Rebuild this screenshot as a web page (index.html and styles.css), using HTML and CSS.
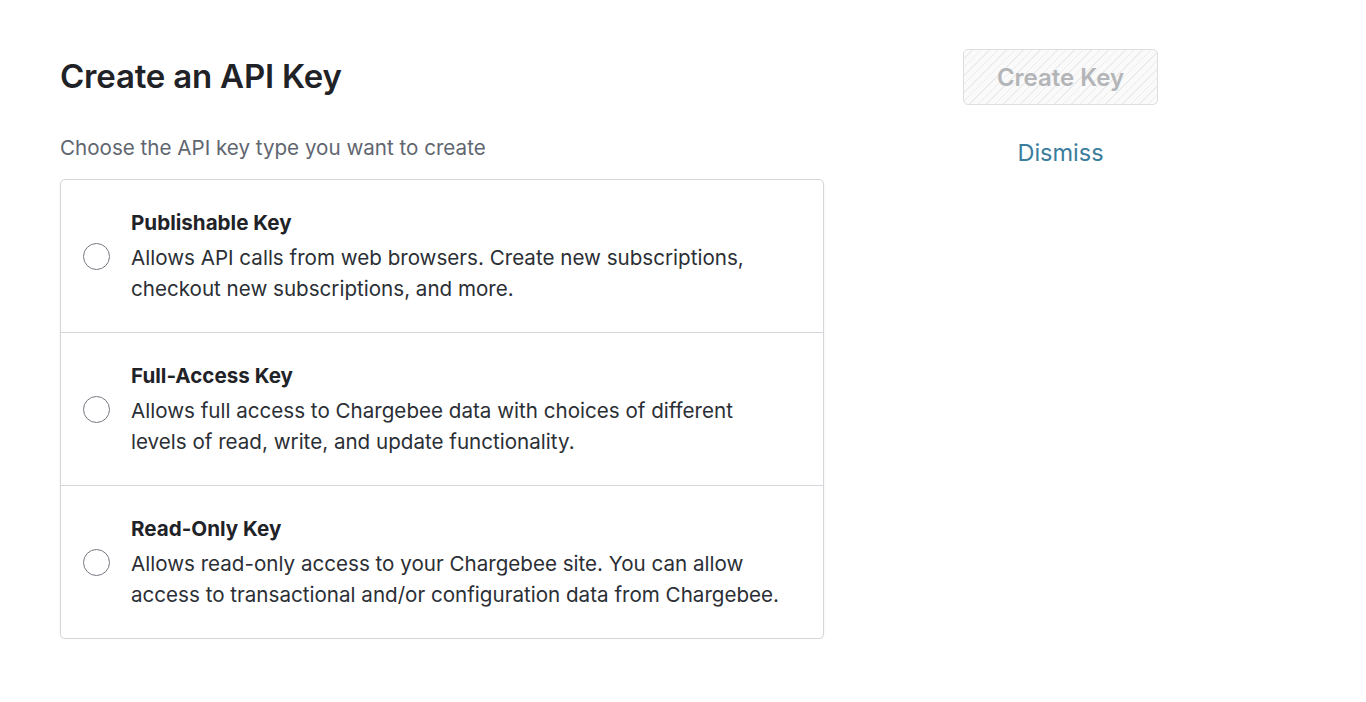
FILE: index.html
```html
<!DOCTYPE html>
<html lang="en">
<head>
    <meta charset="UTF-8">
    <meta name="viewport" content="width=device-width, initial-scale=1.0">
    <title>Create an API Key</title>
    <link rel="stylesheet" href="styles.css">
</head>
<body>

<div class="page">
    <div class="main">
        <h1>Create an API Key</h1>
        <p class="hint">Choose the API key type you want to create</p>

        <div class="key-list">
            <label class="key-option">
                <input type="radio" name="key-type" value="publishable">
                <span class="key-text">
                    <strong>Publishable Key</strong>
                    <span>Allows API calls from web browsers. Create new subscriptions, checkout new subscriptions, and more.</span>
                </span>
            </label>
            <label class="key-option">
                <input type="radio" name="key-type" value="full">
                <span class="key-text">
                    <strong>Full-Access Key</strong>
                    <span>Allows full access to Chargebee data with choices of different levels of read, write, and update functionality.</span>
                </span>
            </label>
            <label class="key-option">
                <input type="radio" name="key-type" value="readonly">
                <span class="key-text">
                    <strong>Read-Only Key</strong>
                    <span>Allows read-only access to your Chargebee site. You can allow access to transactional and/or configuration data from Chargebee.</span>
                </span>
            </label>
        </div>
    </div>

    <div class="actions">
        <button class="create-btn" disabled>Create Key</button>
        <a href="#" class="dismiss">Dismiss</a>
    </div>
</div>

</body>
</html>
```

FILE: styles.css
```css
body {
    font-family: Inter, "Noto Sans", sans-serif;
    background-color: #fff;
    color: #1f2328;
    margin: 0;
    padding: 0;
}
.page {
    display: flex;
    padding: 49px 0 0 60px;
}
.main {
    width: 764px;
}
h1 {
    font-size: 33px;
    font-weight: 600;
    margin: 7px 0 0;
    line-height: 40px;
    letter-spacing: -0.2px;
}
.hint {
    font-size: 20.6px;
    color: #5f6670;
    margin: 39px 0 0;
    line-height: 26px;
}
.key-list {
    margin-top: 18px;
    border: 1px solid #d4d6da;
    border-radius: 5px;
    box-shadow: 0 1px 2px rgba(0, 0, 0, 0.08);
}
.key-option {
    display: flex;
    align-items: center;
    height: 152px;
    border-bottom: 1px solid #d4d6da;
    cursor: pointer;
}
.key-option:last-child {
    border-bottom: none;
}
.key-option input {
    appearance: none;
    width: 27px;
    height: 27px;
    border: 1.5px solid #74787e;
    border-radius: 50%;
    margin: 1px 0 0 22px;
    flex-shrink: 0;
}
.key-text {
    display: flex;
    flex-direction: column;
    max-width: 660px;
    margin: 0 0 2px 21px;
    font-size: 20.6px;
    line-height: 31px;
    color: #2b2f35;
}
.key-text strong {
    font-weight: 700;
    color: #1f2328;
    margin-bottom: 4px;
}
.actions {
    display: flex;
    flex-direction: column;
    align-items: center;
    margin-left: 139px;
}
.create-btn {
    width: 195px;
    height: 56px;
    font-family: inherit;
    font-size: 24px;
    font-weight: 600;
    color: #b3b5b8;
    border: 1px solid #dcdee1;
    border-radius: 5px;
    background-color: #fafafa;
    background-image: repeating-linear-gradient(-45deg, #ececec 0, #ececec 1px, transparent 1px, transparent 6px);
}
.dismiss {
    margin-top: 33px;
    font-size: 23.5px;
    color: #3b7d9c;
    text-decoration: none;
}
```
